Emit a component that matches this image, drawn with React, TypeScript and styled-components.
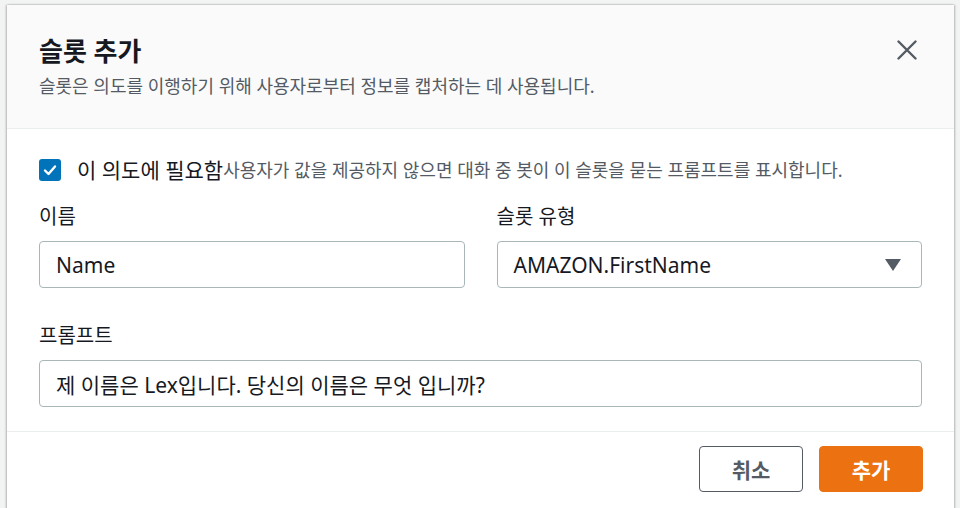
import React from "react";
import styled, { createGlobalStyle } from "styled-components";

const GlobalStyle = createGlobalStyle`
  html, body {
    margin: 0;
    padding: 0;
    background: #f2f3f3;
    font-family: "Noto Sans", "Noto Sans CJK KR", sans-serif;
    color: #16191f;
  }
  * { box-sizing: border-box; }
`;

const Page = styled.div`
  width: 960px;
  height: 508px;
  overflow: hidden;
  padding: 5px 6px 0 7px;
`;

const Dialog = styled.div`
  width: 947px;
  height: 520px;
  background: #ffffff;
  box-shadow: -1px 0 2px rgba(0, 0, 0, 0.25), 1px 0 2px rgba(0, 0, 0, 0.25);
  display: flex;
  flex-direction: column;
`;

const Header = styled.div`
  background: #fafafa;
  border-bottom: 1px solid #eaeded;
  height: 124px;
  padding: 28px 32px 0 32px;
  display: flex;
  justify-content: space-between;
  align-items: flex-start;
`;

const Title = styled.h2`
  margin: 0;
  font-size: 26px;
  font-weight: 700;
  line-height: 36px;
`;

const Subtitle = styled.p`
  margin: 4px 0 0;
  font-size: 18px;
  line-height: 26px;
  color: #545b64;
`;

const CloseButton = styled.button`
  border: 0;
  background: none;
  padding: 0;
  margin: 7px 5px 0 0;
  width: 20px;
  height: 20px;
  display: flex;
  align-items: center;
  justify-content: center;
  cursor: pointer;
`;

const Body = styled.div`
  padding: 21px 32px 24px 32px;
  display: flex;
  flex-direction: column;
  border-bottom: 1px solid #eaeded;
`;

const CheckRow = styled.label`
  display: flex;
  align-items: center;
  height: 40px;
  white-space: nowrap;
`;

const CheckBox = styled.span`
  width: 22px;
  height: 22px;
  border-radius: 3px;
  background: #0073bb;
  display: flex;
  align-items: center;
  justify-content: center;
  margin-right: 16px;
`;

const CheckLabel = styled.span`
  font-size: 21px;
  line-height: 28px;
  color: #16191f;
`;

const CheckHint = styled.span`
  font-size: 18px;
  line-height: 28px;
  color: #545b64;
`;

const Grid = styled.div`
  display: grid;
  grid-template-columns: 1fr 1fr;
  column-gap: 32px;
  margin-top: 13px;
`;

const Field = styled.div`
  display: flex;
  flex-direction: column;
`;

const Label = styled.div`
  font-size: 20px;
  line-height: 28px;
  margin-bottom: 10px;
`;

const Input = styled.div`
  height: 47px;
  border: 1px solid #aab7b8;
  border-radius: 4px;
  padding: 0 19px 0 16px;
  display: flex;
  align-items: center;
  justify-content: space-between;
  font-size: 21px;
  color: #16191f;
  background: #fff;
  white-space: nowrap;
`;

const PromptField = styled(Field)`
  margin-top: 34px;
`;

const Footer = styled.div`
  display: flex;
  justify-content: flex-end;
  gap: 16px;
  padding: 14px 31px;
`;

const Button = styled.button<{ $primary?: boolean }>`
  width: 104px;
  height: 46px;
  border-radius: 4px;
  font-family: inherit;
  font-size: 21px;
  font-weight: 700;
  cursor: pointer;
  border: 1px solid ${(p) => (p.$primary ? "#ec7211" : "#545b64")};
  background: ${(p) => (p.$primary ? "#ec7211" : "#ffffff")};
  color: ${(p) => (p.$primary ? "#ffffff" : "#545b64")};
`;

export default function App() {
  return (
    <>
      <GlobalStyle />
      <Page>
        <Dialog>
          <Header>
            <div>
              <Title>슬롯 추가</Title>
              <Subtitle>슬롯은 의도를 이행하기 위해 사용자로부터 정보를 캡처하는 데 사용됩니다.</Subtitle>
            </div>
            <CloseButton aria-label="닫기">
              <svg width="20" height="20" viewBox="0 0 20 20">
                <path d="M1.5 1.5L18.5 18.5M18.5 1.5L1.5 18.5" stroke="#545b64" strokeWidth="2.4" strokeLinecap="round" />
              </svg>
            </CloseButton>
          </Header>
          <Body>
            <CheckRow>
              <CheckBox>
                <svg width="16" height="16" viewBox="0 0 16 16">
                  <path d="M3 8.5L6.5 12L13 4.5" stroke="#fff" strokeWidth="2.4" fill="none" strokeLinecap="round" strokeLinejoin="round" />
                </svg>
              </CheckBox>
              <CheckLabel>이 의도에 필요함</CheckLabel>
              <CheckHint>사용자가 값을 제공하지 않으면 대화 중 봇이 이 슬롯을 묻는 프롬프트를 표시합니다.</CheckHint>
            </CheckRow>
            <Grid>
              <Field>
                <Label>이름</Label>
                <Input>Name</Input>
              </Field>
              <Field>
                <Label>슬롯 유형</Label>
                <Input>
                  AMAZON.FirstName
                  <svg width="18" height="14" viewBox="0 0 18 14">
                    <path d="M1 1H17L9 13Z" fill="#545b64" />
                  </svg>
                </Input>
              </Field>
            </Grid>
            <PromptField>
              <Label>프롬프트</Label>
              <Input>제 이름은 Lex입니다. 당신의 이름은 무엇 입니까?</Input>
            </PromptField>
          </Body>
          <Footer>
            <Button>취소</Button>
            <Button $primary>추가</Button>
          </Footer>
        </Dialog>
      </Page>
    </>
  );
}
